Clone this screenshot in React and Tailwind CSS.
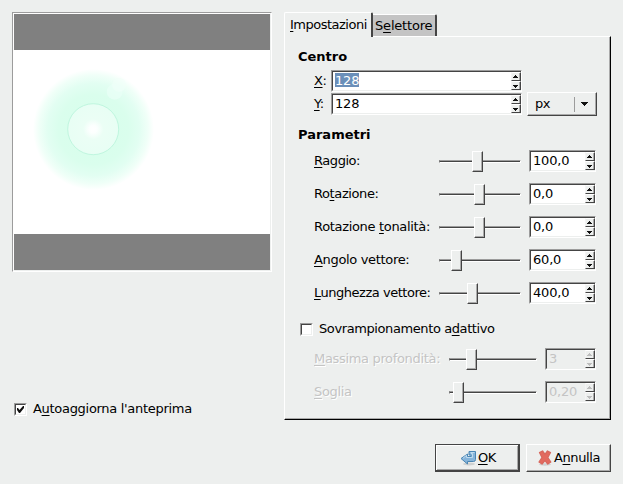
function U({ children }) {
  return (
    <span className="underline decoration-1 underline-offset-2 [text-decoration-skip-ink:none]">
      {children}
    </span>
  );
}

function Arrow({ up, disabled }) {
  const fill = disabled ? "#bdbdbd" : "#111";
  return (
    <div className="flex h-[9px] w-[10px] items-center justify-center border-t border-l border-r border-b border-t-white border-l-[#f4f4f4] border-r-[#444] border-b-[#444] bg-[#edefee] shadow-[inset_-1px_0_#aaa]">
      <svg width="7" height="4" viewBox="0 0 7 4" shapeRendering="crispEdges">
        {up ? (
          <path d="M2 0h1v1h1v1h1v1H0V2h1V1h1z" fill={fill} />
        ) : (
          <path d="M0 1h5v1H4v1H3v1H2V3H1V2H0z" fill={fill} />
        )}
      </svg>
    </div>
  );
}

function Spin({ value, className, disabled, selected }) {
  return (
    <div className={`h-[22px] shrink-0 border border-t-[#9c9c9c] border-l-[#9c9c9c] border-r-white border-b-white ${className}`}>
      <div className={`flex h-full justify-between border-t border-b border-l border-t-[#444] border-l-[#444] border-b-[#edefee] ${disabled ? "bg-[#edefee] text-[#c4c4c4]" : "bg-white"}`}>
        <div className="pt-px pl-[2px] leading-[16px] tracking-[-0.2px]">
          <span className={selected ? "inline-block h-[14px] bg-[#6b8fb9] leading-[15px] text-white" : ""}>{value}</span>
        </div>
        <div className="flex flex-col">
          <Arrow up disabled={disabled} />
          <Arrow disabled={disabled} />
        </div>
      </div>
    </div>
  );
}

function Slider({ className, thumb }) {
  return (
    <div className={`flex h-[22px] shrink-0 items-center ${className}`}>
      <div className="relative h-[3px] w-full border-t border-r border-l border-b border-t-[#9c9c9c] border-l-[#777] border-r-white border-b-white bg-[#444]">
        <div className={`absolute top-[-10px] h-[21px] w-[11px] border border-t-white border-l-white border-r-[#444] border-b-[#444] bg-[#edefee] shadow-[inset_-1px_-1px_#aaa] ${thumb}`} />
      </div>
    </div>
  );
}

function Row({ label, tracking, thumb, value, disabled }) {
  return (
    <div className="mb-[11px] flex h-[22px] items-center">
      <div className={`${disabled ? "w-[135px] text-[#c4c4c4] [text-shadow:1px_1px_white]" : "w-[125px]"} whitespace-nowrap ${tracking}`}>
        {label}
      </div>
      <Slider className={disabled ? "w-[88px]" : "w-[82px]"} thumb={thumb} />
      <Spin value={value} disabled={disabled} className={disabled ? "ml-[8px] w-[51px]" : "ml-[8px] w-[67px]"} />
    </div>
  );
}

function Check({ checked }) {
  return (
    <div className="h-[13px] w-[13px] shrink-0 border border-t-[#9c9c9c] border-l-[#9c9c9c] border-r-white border-b-white">
      <div className="h-full border border-t-[#444] border-l-[#444] border-r-[#edefee] border-b-[#edefee] bg-white">
        {checked && (
          <svg width="9" height="9" viewBox="0 0 9 9" className="block">
            <path d="M1 3l1 0 1.5 2L7 1h1v2L4 8H3L1 5z" fill="#111" />
          </svg>
        )}
      </div>
    </div>
  );
}

function Preview() {
  return (
    <div className="h-[260px] w-[260px] border border-t-[#9c9c9c] border-l-[#9c9c9c] border-r-white border-b-white">
      <div className="h-full border border-white border-r-[#edefee] border-b-[#edefee] bg-[#808080] py-[36px]">
        <svg width="256" height="184" viewBox="14 50 256 184" className="block bg-white">
          <defs>
            <radialGradient id="halo">
              <stop offset="0" stopColor="#d6feeb" />
              <stop offset="0.58" stopColor="#dafeed" />
              <stop offset="0.76" stopColor="#e2fef2" />
              <stop offset="0.9" stopColor="#f0fff8" />
              <stop offset="1" stopColor="#fff" />
            </radialGradient>
            <radialGradient id="core">
              <stop offset="0" stopColor="#fff" />
              <stop offset="0.15" stopColor="#fcfffe" />
              <stop offset="0.4" stopColor="#ebfef5" />
              <stop offset="1" stopColor="#e8fef4" />
            </radialGradient>
          </defs>
          <circle cx="93.500" cy="129.500" r="60.500" fill="url(#halo)" />
          <circle cx="114.700" cy="91.700" r="8" fill="#e9fff6" opacity=".7" />
          <circle cx="119" cy="85" r="7" fill="#f2fff9" opacity=".5" />
          <circle cx="93.200" cy="129.200" r="25.500" fill="url(#core)" stroke="#c0f6df" />
        </svg>
      </div>
    </div>
  );
}

function OkIcon() {
  return (
    <svg width="17" height="16" viewBox="0 0 17 16">
      <ellipse cx="9" cy="14" rx="6" ry="1.500" fill="#cfd1d1" />
      <path d="M7.500 4v2.500h3.500V5H9V1.500h6.500v8q0 2-2 2h-6V14L1 8.500z" fill="#86b4da" stroke="#4a86b4" strokeLinejoin="round" />
      <path d="M3 8.300l3.500-3V7.500h6V3.500h-1.500M10.500 2.500h4" fill="none" stroke="#c0dbee" />
    </svg>
  );
}

function CancelIcon() {
  return (
    <svg width="14" height="16" viewBox="0 0 14 16">
      <ellipse cx="7" cy="14.500" rx="6" ry="1.200" fill="#cfd1d1" />
      <path d="M1.500 2.500l3-1.500L7 4.500 9.500 1l3 1.500-2.700 5 3 4.500-3 2L7 10.500 4 14l-3-2L4 7.500z" fill="#e36a5f" stroke="#d8685e" strokeWidth="1.300" strokeLinejoin="round" />
    </svg>
  );
}

export default function App() {
  return (
    <div className="flex h-[484px] w-[623px] flex-col bg-[#edefee] pt-[12px] pl-[12px] font-['DejaVu_Sans',sans-serif] text-[13px] leading-[16px] text-black">
      <div className="flex h-[408px]">
        <div className="flex w-[272px] flex-col">
          <Preview />
          <div className="mt-[129px] ml-[2px] flex items-center gap-[6px]">
            <Check checked />
            <span className="tracking-[-0.3px]">A<U>u</U>toaggiorna l'anteprima</span>
          </div>
        </div>
        <div className="flex w-[327px] flex-col">
          <div className="flex h-[24px] items-end">
            <div className="z-10 -mb-px h-[25px] w-[89px] rounded-t-[2px] border-t border-l border-r-2 border-t-white border-l-white border-r-[#444] bg-[#edefee] pt-[4px] pl-[5px] tracking-[-0.5px]">
              <U>I</U>mpostazioni
            </div>
            <div className="h-[22px] w-[64px] rounded-tr-[2px] border-t border-r-2 border-t-white border-r-[#444] bg-[#c4c4c4] pt-[3px] pl-[2px] tracking-[-0.2px]">
              S<U>e</U>lettore
            </div>
          </div>
          <div className="h-[384px] border border-t-white border-l-white border-r-black border-b-black">
            <div className="h-full border-r border-b border-[#aaa] pl-[13px]">
              <div className="pt-[12px] font-bold">Centro</div>
              <div className="mt-[5px] flex items-end">
                <div className="flex flex-col gap-px pl-[16px]">
                  <div className="flex items-center">
                    <span className="w-[17px] tracking-[-0.4px]"><U>X</U>:</span>
                    <Spin value="128" selected className="w-[191px]" />
                  </div>
                  <div className="flex items-center">
                    <span className="w-[17px] tracking-[-0.6px]"><U>Y</U>:</span>
                    <Spin value="128" className="w-[191px]" />
                  </div>
                </div>
                <div className="-mb-px ml-[5px] flex h-[24px] w-[70px] items-center border border-t-white border-l-white border-r-[#444] border-b-[#444] pl-[7px] shadow-[inset_-1px_-1px_#aaa]">
                  <span className="w-[39px] tracking-[-0.5px]">px</span>
                  <div className="h-[15px] border-l border-[#9c9c9c]" />
                  <svg width="7" height="4" viewBox="0 0 7 4" shapeRendering="crispEdges" className="ml-[6px]">
                    <path d="M0 0h7v1H6v1H5v1H4v1H3V3H2V2H1V1H0z" fill="#111" />
                  </svg>
                </div>
              </div>
              <div className="mt-[12px] font-bold">Parametri</div>
              <div className="mt-[7px] pl-[16px]">
                <Row label={<><U>R</U>aggio:</>} tracking="tracking-[-0.45px]" thumb="left-[32px]" value="100,0" />
                <Row label={<>Ro<U>t</U>azione:</>} tracking="tracking-[-0.4px]" thumb="left-[34px]" value="0,0" />
                <Row label={<>Rotazione <U>t</U>onalità:</>} tracking="tracking-[-0.32px]" thumb="left-[34px]" value="0,0" />
                <Row label={<><U>A</U>ngolo vettore:</>} tracking="tracking-[-0.33px]" thumb="left-[11px]" value="60,0" />
                <Row label={<><U>L</U>unghezza vettore:</>} tracking="tracking-[-0.48px]" thumb="left-[27px]" value="400,0" />
              </div>
              <div className="mt-[17px] ml-[2px] flex h-[16px] items-center gap-[6px]">
                <Check />
                <span className="tracking-[-0.4px]">Sovrampionamento a<U>d</U>attivo</span>
              </div>
              <div className="mt-[11px] pl-[16px]">
                <Row disabled label={<><U>M</U>assima profondità:</>} tracking="tracking-[-0.33px]" thumb="left-[16px]" value="3" />
                <Row disabled label={<><U>S</U>oglia</>} tracking="tracking-[-0.35px]" thumb="left-[3px]" value="0,20" />
              </div>
            </div>
          </div>
        </div>
      </div>
      <div className="mt-[24px] flex h-[28px] gap-[6px] pl-[423px]">
        <div className="flex w-[85px] items-center border border-r-2 border-b-2 border-[#444] pl-[24px] shadow-[inset_1px_1px_white,inset_-1px_-1px_#aaa]">
          <OkIcon />
          <span className="ml-px tracking-[-0.6px]"><U>O</U>K</span>
        </div>
        <div className="flex w-[85px] items-center border border-t-white border-l-white border-r-[#444] border-b-[#444] pl-[11px] shadow-[inset_-1px_-1px_#aaa]">
          <CancelIcon />
          <span className="ml-[2px] tracking-[-0.4px]">A<U>n</U>nulla</span>
        </div>
      </div>
    </div>
  );
}
